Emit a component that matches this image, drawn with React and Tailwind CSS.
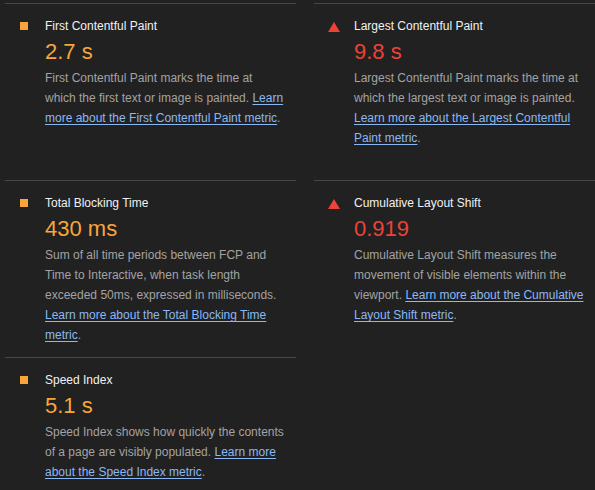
const ORANGE = 'text-[#f9a53a]';
const RED = 'text-[#ee4138]';

const METRICS = [
  {
    title: 'First Contentful Paint',
    value: '2.7 s',
    level: 'average',
    text: 'First Contentful Paint marks the time at which the first text or image is painted.',
    link: 'Learn more about the First Contentful Paint metric',
  },
  {
    title: 'Largest Contentful Paint',
    value: '9.8 s',
    level: 'fail',
    text: 'Largest Contentful Paint marks the time at which the largest text or image is painted.',
    link: 'Learn more about the Largest Contentful Paint metric',
  },
  {
    title: 'Total Blocking Time',
    value: '430 ms',
    level: 'average',
    text: 'Sum of all time periods between FCP and Time to Interactive, when task length exceeded 50ms, expressed in milliseconds.',
    link: 'Learn more about the Total Blocking Time metric',
  },
  {
    title: 'Cumulative Layout Shift',
    value: '0.919',
    level: 'fail',
    text: 'Cumulative Layout Shift measures the movement of visible elements within the viewport.',
    link: 'Learn more about the Cumulative Layout Shift metric',
  },
  {
    title: 'Speed Index',
    value: '5.1 s',
    level: 'average',
    text: 'Speed Index shows how quickly the contents of a page are visibly populated.',
    link: 'Learn more about the Speed Index metric',
  },
];

function Icon({ level }) {
  if (level === 'fail') {
    return <span className="-ml-px mt-[6px] block h-0 w-0 border-x-[6px] border-b-[10px] border-x-transparent border-b-[#ee4138]"/>;
  }
  return <span className="mt-[6px] block h-2 w-2 bg-[#f9a53a]"/>;
}

function Metric({ metric }) {
  const tone = metric.level === 'fail' ? RED : ORANGE;
  return <div className="flex border-t border-[#474747] pb-3 pl-[15px] pr-[11px] pt-3">
    <div className="w-[25px] shrink-0">
      <Icon level={metric.level}/>
    </div>
    <div className="w-[240px]">
      <p className="text-[12px] leading-5 text-[#f1f1f1]">{metric.title}</p>
      <p className={`text-[22px] leading-8 ${tone}`}>{metric.value}</p>
      <p className="text-[12px] leading-5 text-[#a3a3a3]">
        {metric.text}{' '}
        <a href="#" className="text-[#8ab8f5] underline underline-offset-2">{metric.link}</a>.
      </p>
    </div>
  </div>;
}

export default function App() {
  return <div className="h-[490px] w-[595px] overflow-hidden bg-[#212121] pl-[5px] pt-[3px]" style={{ fontFamily: '"Liberation Sans", Arial, sans-serif' }}>
    <div className="grid w-[620px] auto-rows-fr grid-cols-[291px_291px] gap-x-[18px]">
      {METRICS.map(metric => <Metric key={metric.title} metric={metric}/>)}
    </div>
  </div>;
}
